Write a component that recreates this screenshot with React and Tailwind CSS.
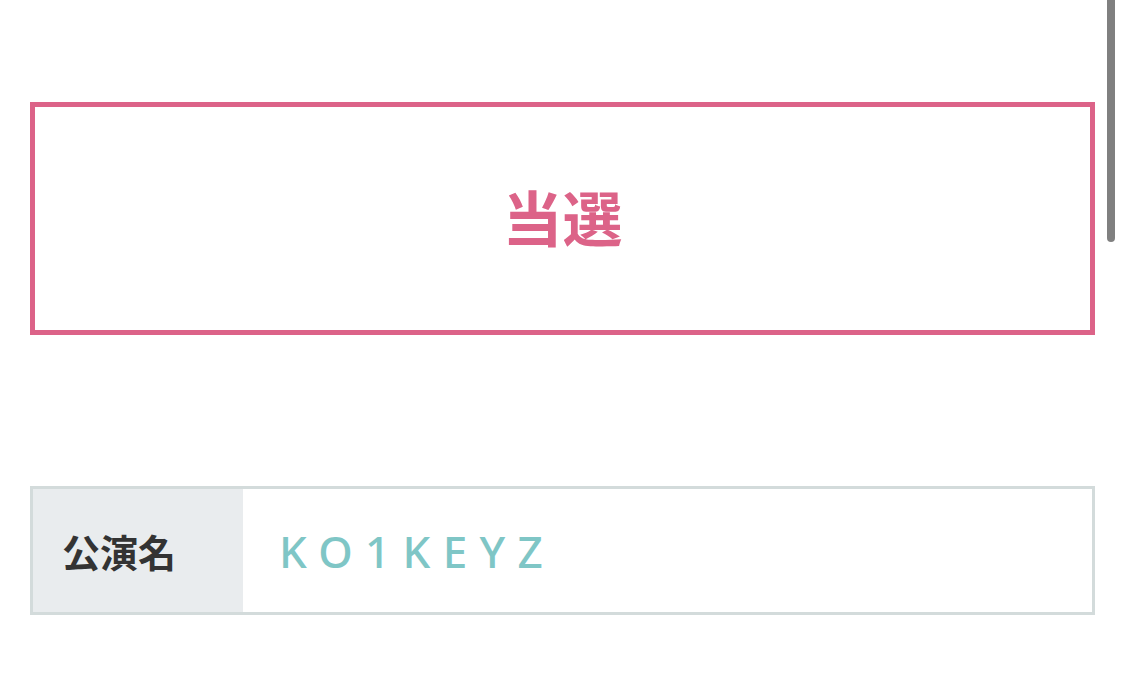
import React from 'react';

export default function App() {
  return (
    <div className="relative min-h-[675px] w-full bg-white" style={{ fontFamily: '"Noto Sans", "Noto Sans CJK JP", sans-serif' }}>
      {/* scrollbar thumb */}
      <div className="absolute right-[10px] top-0 h-[242px] w-[8px] rounded-b-full bg-[#808080]" />

      <div className="px-[30px] pt-[102px]">
        {/* result box */}
        <div className="flex h-[233px] items-center justify-center border-[5px] border-[#dc6388] pb-[6px]">
          <span className="text-[60px] font-bold leading-none text-[#dc6388]" style={{ fontFamily: '"Noto Sans CJK JP", sans-serif' }}>
            当選
          </span>
        </div>

        {/* info table */}
        <div className="mt-[151px] flex h-[129px] border-[3px] border-[#d3dbdb]">
          <div className="flex w-[210px] items-center bg-[#e9ecee] pl-[29px]">
            <span className="text-[38px] font-bold leading-none text-[#333333]" style={{ fontFamily: '"Noto Sans CJK JP", sans-serif' }}>
              公演名
            </span>
          </div>
          <div className="flex flex-1 items-center pl-[36px]">
            <span className="text-[44px] font-medium leading-none tracking-[0.28em] text-[#7fc6c6]" style={{ fontFamily: '"Noto Sans", sans-serif' }}>
              KO1KEYZ
            </span>
          </div>
        </div>
      </div>
    </div>
  );
}
